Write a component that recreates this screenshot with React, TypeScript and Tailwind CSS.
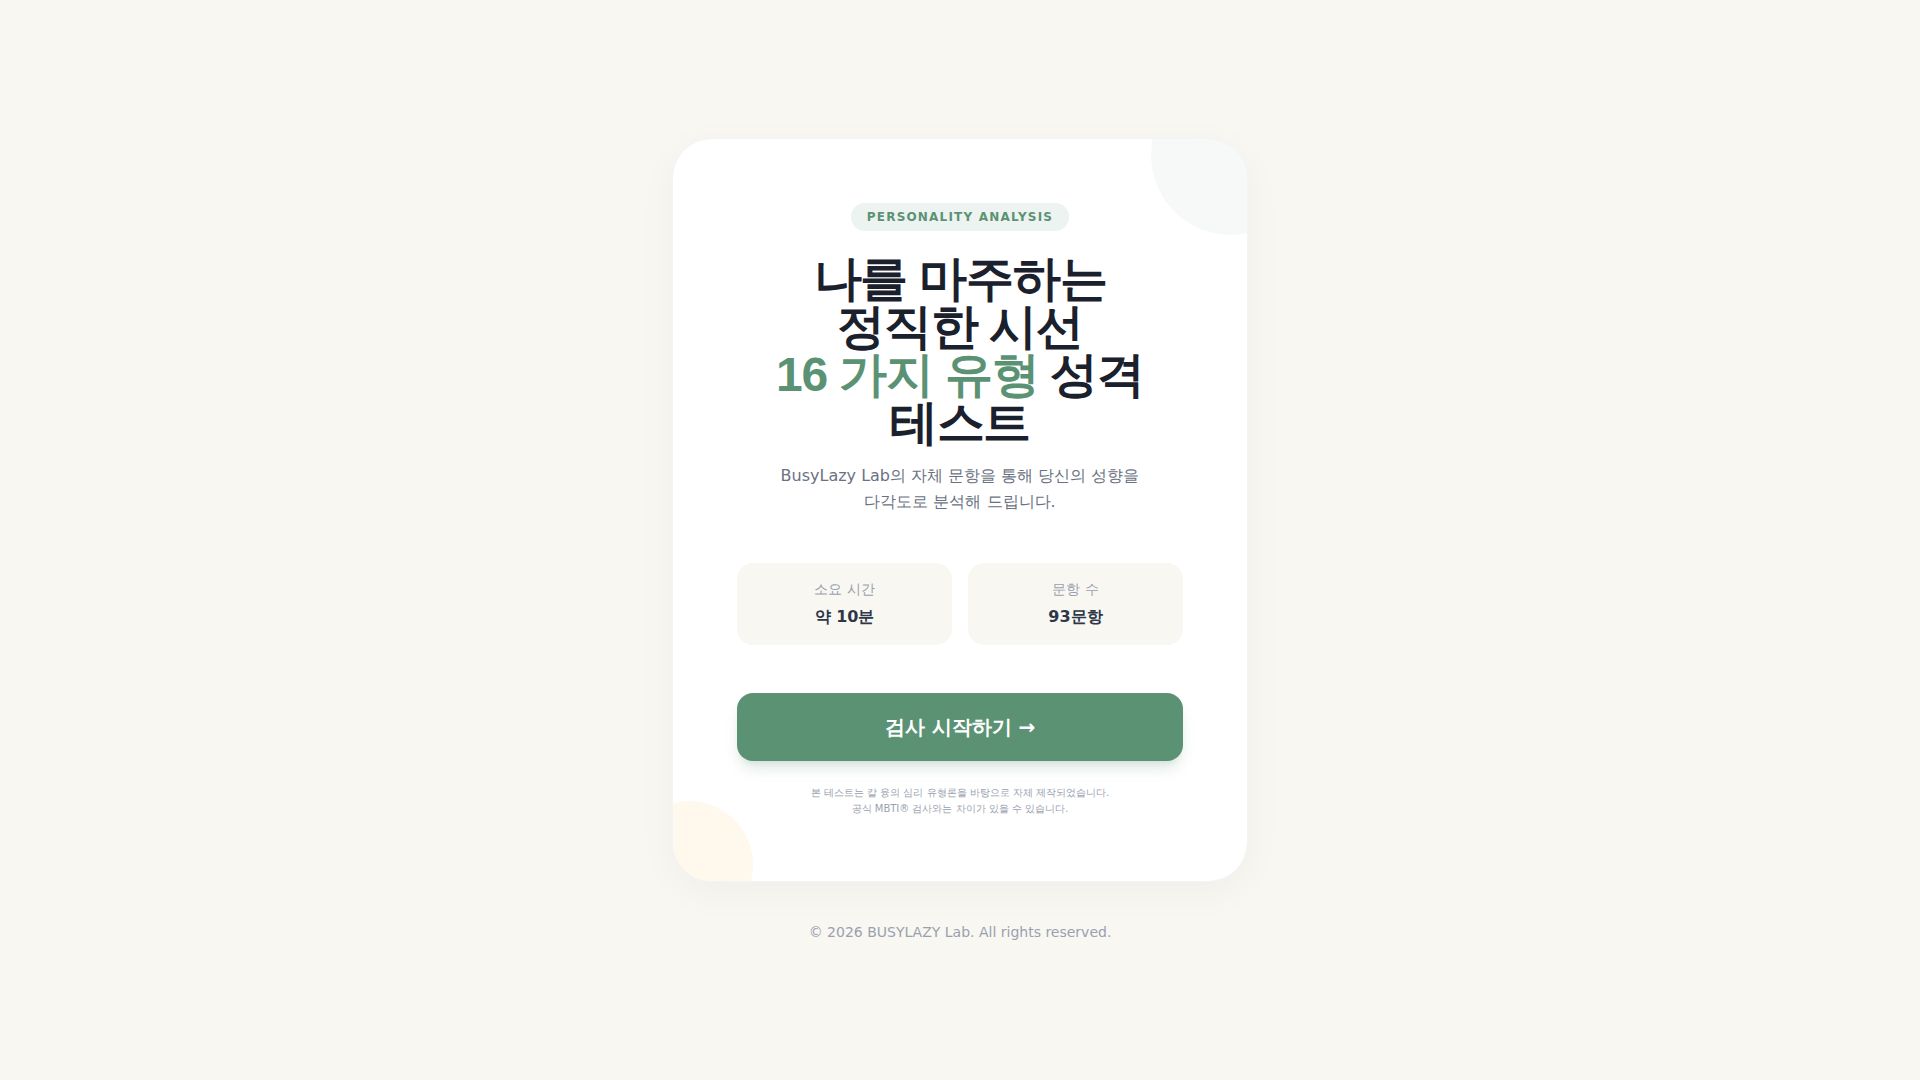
import React from 'react';

interface InfoCardProps {
  label: string;
  value: string;
}

const InfoCard: React.FC<InfoCardProps> = ({ label, value }) => (
  <div className="rounded-2xl bg-[#f9f7f2] p-4">
    <dt className="text-sm text-gray-400 mb-1.5">{label}</dt>
    <dd className="font-bold text-[#2d3748]">{value}</dd>
  </div>
);

export default function App() {
  return (
    <div className="min-h-screen flex flex-col items-center justify-center bg-[#f9f7f2] p-4 text-[#2d3748] break-keep font-['DejaVu_Sans',sans-serif]">
      <main className="relative w-full max-w-xl overflow-hidden rounded-[40px] border border-gray-100 bg-white p-8 md:p-16 text-center shadow-[0_10px_40px_rgba(0,0,0,0.04)]">
        <div className="absolute -top-16 -right-16 h-40 w-40 rounded-full bg-[#5b9274]/5" />
        <div className="absolute -bottom-12 -left-12 h-32 w-32 rounded-full bg-[#fff8ec]" />

        <div className="relative">
          <span className="inline-block rounded-full bg-[#edf3f0] px-4 py-1.5 mb-6 text-xs font-bold tracking-widest text-[#5b9274]">
            PERSONALITY ANALYSIS
          </span>
          <h1 className="mb-4 text-5xl font-bold leading-none tracking-tight text-[#1a202c] font-['Liberation_Sans',sans-serif]">
            나를 마주하는
            <br />
            정직한 시선
            <br />
            <span className="text-[#5b9274]">16 가지 유형</span> 성격 테스트
          </h1>
          <p className="mb-12 leading-relaxed text-gray-500">
            BusyLazy Lab의 자체 문항을 통해 당신의 성향을
            <br />
            다각도로 분석해 드립니다.
          </p>

          <dl className="mb-12 grid grid-cols-2 gap-4">
            <InfoCard label="소요 시간" value="약 10분" />
            <InfoCard label="문항 수" value="93문항" />
          </dl>

          <button
            type="button"
            className="w-full rounded-2xl bg-[#5b9274] py-5 text-xl font-bold text-white shadow-lg shadow-[#5b9274]/20"
          >
            검사 시작하기 →
          </button>

          <p className="mt-6 text-[10px] leading-4 text-gray-400">
            본 테스트는 칼 융의 심리 유형론을 바탕으로 자체 제작되었습니다.
            <br />
            공식 MBTI® 검사와는 차이가 있을 수 있습니다.
          </p>
        </div>
      </main>

      <footer className="mt-10 text-sm text-gray-400">© 2026 BUSYLAZY Lab. All rights reserved.</footer>
    </div>
  );
}
